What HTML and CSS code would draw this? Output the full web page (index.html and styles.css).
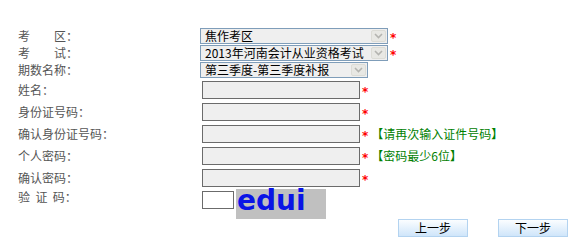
FILE: index.html
```html
<!DOCTYPE html>
<html lang="zh-CN">
<head>
<meta charset="utf-8">
<title>报名信息</title>
<link rel="stylesheet" href="styles.css">
</head>
<body>
<div class="form">
  <div class="row r-sel1">
    <span class="label">考　　区：</span>
    <div class="field">
      <div class="sel sel-wide"><span class="sel-text">焦作考区</span><span class="sel-btn"><svg width="9" height="6" viewBox="0 0 9 6"><polyline points="1,1 4.5,4.5 8,1" fill="none" stroke="#b4b4b0" stroke-width="1.6"/></svg></span></div>
      <span class="req">*</span>
    </div>
  </div>
  <div class="row r-sel2">
    <span class="label">考　　试：</span>
    <div class="field">
      <div class="sel sel-wide"><span class="sel-text">2013年河南会计从业资格考试</span><span class="sel-btn"><svg width="9" height="6" viewBox="0 0 9 6"><polyline points="1,1 4.5,4.5 8,1" fill="none" stroke="#b4b4b0" stroke-width="1.6"/></svg></span></div>
      <span class="req">*</span>
    </div>
  </div>
  <div class="row r-sel3">
    <span class="label">期数名称：</span>
    <div class="field">
      <div class="sel sel-narrow"><span class="sel-text">第三季度-第三季度补报</span><span class="sel-btn"><svg width="9" height="6" viewBox="0 0 9 6"><polyline points="1,1 4.5,4.5 8,1" fill="none" stroke="#b4b4b0" stroke-width="1.6"/></svg></span></div>
    </div>
  </div>
  <div class="row r-in">
    <span class="label">姓名：</span>
    <div class="field"><input class="txt" type="text"><span class="req req-in">*</span></div>
  </div>
  <div class="row r-in">
    <span class="label">身份证号码：</span>
    <div class="field"><input class="txt" type="text"><span class="req req-in">*</span></div>
  </div>
  <div class="row r-in">
    <span class="label">确认身份证号码：</span>
    <div class="field"><input class="txt" type="text"><span class="req req-in">*</span><span class="tip">【请再次输入证件号码】</span></div>
  </div>
  <div class="row r-in">
    <span class="label">个人密码：</span>
    <div class="field"><input class="txt" type="password"><span class="req req-in">*</span><span class="tip">【密码最少6位】</span></div>
  </div>
  <div class="row r-in">
    <span class="label">确认密码：</span>
    <div class="field"><input class="txt" type="password"><span class="req req-in">*</span></div>
  </div>
  <div class="row r-code">
    <span class="label">验&nbsp;&nbsp;证&nbsp;&nbsp;码：</span>
    <div class="field field-code"><input class="code-in" type="text"><div class="captcha">edui</div></div>
  </div>
  <div class="buttons">
    <button class="btn" type="button">上一步</button>
    <button class="btn" type="button">下一步</button>
  </div>
</div>
</body>
</html>
```
FILE: styles.css
```css
html, body {
  margin: 0;
  padding: 0;
  background: #fff;
}
body {
  font-family: "Noto Sans CJK SC", "DejaVu Sans", sans-serif;
  font-size: 12px;
  color: #000;
}
.form {
  padding: 27px 0 0 18px;
}
.row {
  display: flex;
  align-items: center;
}
.r-sel1 { height: 18px; }
.r-sel2 { height: 16px; }
.r-sel3 { height: 18px; }
.r-in { height: 22px; }
.r-code {
  height: 30px;
  align-items: flex-start;
}
.label {
  width: 182px;
  flex: none;
  color: #555;
  line-height: 14px;
  white-space: nowrap;
}
.r-code .label {
  line-height: 14px;
  padding-top: 1px;
}
.field {
  display: flex;
  align-items: center;
}
.sel {
  box-sizing: border-box;
  height: 16px;
  border: 1px solid #7f9db9;
  background: #efefef;
  display: flex;
  align-items: center;
  justify-content: space-between;
  padding: 0 1px 0 4px;
}
.sel-wide { width: 188px; }
.sel-narrow { width: 168px; }
.sel-text {
  line-height: 14px;
  white-space: nowrap;
  color: #000;
}
.sel-btn {
  box-sizing: border-box;
  width: 15px;
  height: 12px;
  border: 1px solid #dcdcd6;
  border-radius: 2px;
  background: #e8e8e4;
  display: flex;
  align-items: center;
  justify-content: center;
}
.req {
  color: #f00;
  font-family: "DejaVu Sans", sans-serif;
  font-weight: bold;
  font-size: 12px;
  line-height: 12px;
  margin-left: 2px;
  padding-top: 3px;
}
.txt {
  box-sizing: border-box;
  width: 158px;
  height: 18px;
  margin: 0 0 0 2px;
  padding: 0 2px;
  border: 1px solid #6b6b6b;
  border-radius: 0;
  background: #efefef;
  font: inherit;
  outline: none;
}
.tip {
  color: #008000;
  margin-left: 3px;
  line-height: 14px;
  white-space: nowrap;
}
.field-code {
  align-items: flex-start;
}
.code-in {
  box-sizing: border-box;
  width: 32px;
  height: 18px;
  margin: 2px 0 0 2px;
  padding: 0;
  border: 1px solid #6b6b6b;
  border-radius: 0;
  background: #fff;
  outline: none;
}
.captcha {
  width: 90px;
  height: 30px;
  margin-left: 2px;
  background: #c0c0c0;
  color: #0a14e6;
  font-family: "DejaVu Sans", sans-serif;
  font-weight: bold;
  font-size: 28px;
  line-height: 24px;
  padding-left: 1px;
  box-sizing: border-box;
}
.buttons {
  display: flex;
  gap: 30px;
  padding-left: 380px;
}
.btn {
  box-sizing: border-box;
  width: 70px;
  height: 18px;
  padding: 0;
  border: 1px solid #b3d3f0;
  border-radius: 0;
  background: linear-gradient(#fbfdff, #cfe5fa);
  font-family: "Noto Sans CJK SC", sans-serif;
  font-size: 12px;
  line-height: 16px;
  color: #000;
}
```
